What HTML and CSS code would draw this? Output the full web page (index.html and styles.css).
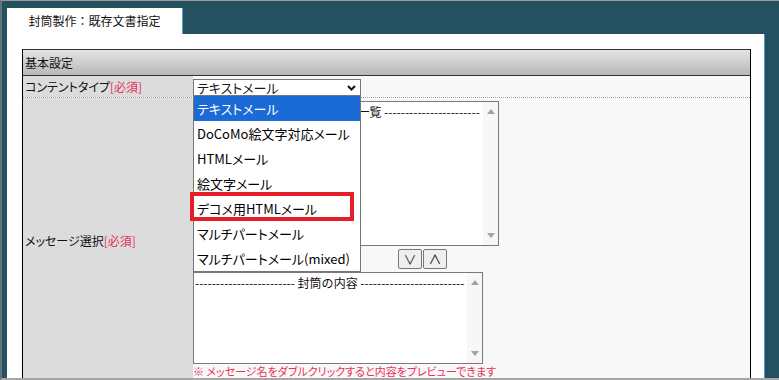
FILE: index.html
```html
<!DOCTYPE html>
<html lang="ja">
<head>
    <meta charset="UTF-8">
    <title>封筒製作：既存文書指定</title>
    <link rel="stylesheet" href="styles.css">
</head>
<body>
<div class="frame">

    <!-- Tab -->
    <div class="tab">封筒製作：既存文書指定</div>

    <!-- Panel -->
    <div class="panel">
        <div class="form-table">
            <div class="form-head">基本設定</div>

            <!-- Content type -->
            <div class="form-row">
                <div class="form-label">コンテントタイプ<span class="req">[必須]</span></div>
                <div class="form-value row-type">
                    <div class="select-wrap">
                        <div class="select">
                            <span>テキストメール</span>
                            <svg class="chevron" width="9" height="6" viewBox="0 0 9 6"><polyline points="1,1 4.5,4.5 8,1" fill="none" stroke="#111" stroke-width="2"/></svg>
                        </div>
                        <ul class="popup">
                            <li class="active">テキストメール</li>
                            <li>DoCoMo絵文字対応メール</li>
                            <li>HTMLメール</li>
                            <li>絵文字メール</li>
                            <li>デコメ用HTMLメール</li>
                            <li>マルチパートメール</li>
                            <li>マルチパートメール(mixed)</li>
                        </ul>
                        <div class="mark"></div>
                    </div>
                </div>
            </div>

            <!-- Message select -->
            <div class="form-row">
                <div class="form-label">メッセージ選択<span class="req">[必須]</span></div>
                <div class="form-value row-msg">
                    <div class="listbox list-all">
                        <div class="list-items">
                            <div class="opt">------------------------ メッセージ一覧 -----------------------</div>
                        </div>
                        <div class="scroll"><i class="up"></i><i class="down"></i></div>
                    </div>
                    <div class="moves">
                        <button type="button">∨</button>
                        <button type="button">∧</button>
                    </div>
                    <div class="listbox list-env">
                        <div class="list-items">
                            <div class="opt">------------------------ 封筒の内容 -------------------------</div>
                        </div>
                        <div class="scroll"><i class="up"></i><i class="down"></i></div>
                    </div>
                    <p class="note">※ メッセージ名をダブルクリックすると内容をプレビューできます</p>
                </div>
            </div>
        </div>
    </div>

</div>
</body>
</html>
```

FILE: styles.css
```css
/* General */
* {
    margin: 0;
    padding: 0;
    box-sizing: border-box;
}
body {
    font-family: "Noto Sans CJK JP", sans-serif;
    font-size: 12px;
    color: #1a1a1a;
    background: #fff;
}

/* Frame */
.frame {
    width: 779px;
    height: 380px;
    overflow: hidden;
    background-color: #25505f;
    border-top: 1px solid #9a9a9a;
    border-left: 2px solid #62737a;
    border-bottom: 2px solid #a6a6a6;
    padding: 7px 14px 0 5px;
}

/* Tab */
.tab {
    width: 176px;
    height: 26px;
    line-height: 26px;
    background-color: #fff;
    border-right: 1px solid #5c9fcc;
    text-align: center;
    font-size: 12px;
    color: #111;
}

/* Panel */
.panel {
    height: 400px;
    background-color: #fff;
    border-right: 1px solid #4f95c8;
    padding: 15px 13px 0 15px;
}

/* Form table */
.form-table {
    width: 729px;
    border-left: 1px solid #000;
    border-right: 1px solid #000;
}
.form-head {
    height: 27px;
    line-height: 25px;
    padding-left: 2px;
    border-top: 1px solid #333;
    border-bottom: 1px solid #333;
    background: linear-gradient(#e3e3e3, #b8b8b8);
    color: #111;
}
.form-row {
    display: flex;
    border-bottom: 1px dotted #a0a0a0;
}
.form-label {
    width: 170px;
    background-color: #dcdcdc;
    padding-left: 2px;
    display: flex;
    align-items: center;
    color: #111;
    font-feature-settings: "palt";
}
.req {
    color: #e2325a;
}
.form-value {
    flex: 1;
    background-color: #f8f8f8;
}
.row-type {
    padding: 3px 0 1px 0;
}
.row-msg {
    padding: 3px 0 4px 0;
}

/* Select + open popup */
.select-wrap {
    position: relative;
    width: 168px;
    font-size: 13px;
    font-feature-settings: "palt";
}
.select {
    height: 17px;
    border: 1px solid #767676;
    background-color: #fff;
    padding-left: 3px;
    line-height: 14px;
    display: flex;
    justify-content: space-between;
    align-items: center;
}
.chevron {
    margin-right: 4px;
}
.popup {
    position: absolute;
    top: 17px;
    left: 0;
    width: 168px;
    list-style: none;
    background-color: #fff;
    border: 1px solid #767676;
    border-top: none;
    z-index: 10;
}
.popup li {
    height: 25px;
    line-height: 25px;
    padding-left: 3px;
    color: #000;
    white-space: nowrap;
}
.popup li.active {
    background-color: #1a6bd6;
    color: #fff;
}
.mark {
    position: absolute;
    left: -3px;
    top: 113px;
    width: 164px;
    height: 29px;
    border: 4px solid #e61e2a;
    z-index: 11;
}

/* List boxes */
.listbox {
    display: flex;
    background-color: #fff;
    border: 1px solid #7a7a7a;
}
.list-all {
    width: 306px;
    height: 145px;
}
.list-env {
    width: 290px;
    height: 92px;
}
.list-items {
    flex: 1;
    padding: 2px 0 0 1px;
    overflow: hidden;
}
.opt {
    line-height: 16px;
    white-space: nowrap;
    color: #111;
}
.scroll {
    width: 15px;
    background-color: #f7f7f7;
    display: flex;
    flex-direction: column;
    justify-content: space-between;
    align-items: center;
    padding: 7px 0;
}
.scroll i {
    width: 0;
    height: 0;
    border-left: 4px solid transparent;
    border-right: 4px solid transparent;
}
.scroll .up {
    border-bottom: 5px solid #a3a3a3;
}
.scroll .down {
    border-top: 5px solid #a3a3a3;
}

/* Move buttons */
.moves {
    display: flex;
    gap: 1px;
    margin: 3px 0 3px 205px;
}
.moves button {
    width: 24px;
    height: 20px;
    border: 1px solid #777;
    border-radius: 2px;
    background-color: #efefef;
    font-family: "Noto Sans CJK JP", sans-serif;
    font-size: 13px;
    line-height: 16px;
    color: #1a1a1a;
}

/* Note */
.note {
    font-size: 11px;
    line-height: 14px;
    color: #e8305a;
    font-feature-settings: "palt";
    white-space: nowrap;
}
```
